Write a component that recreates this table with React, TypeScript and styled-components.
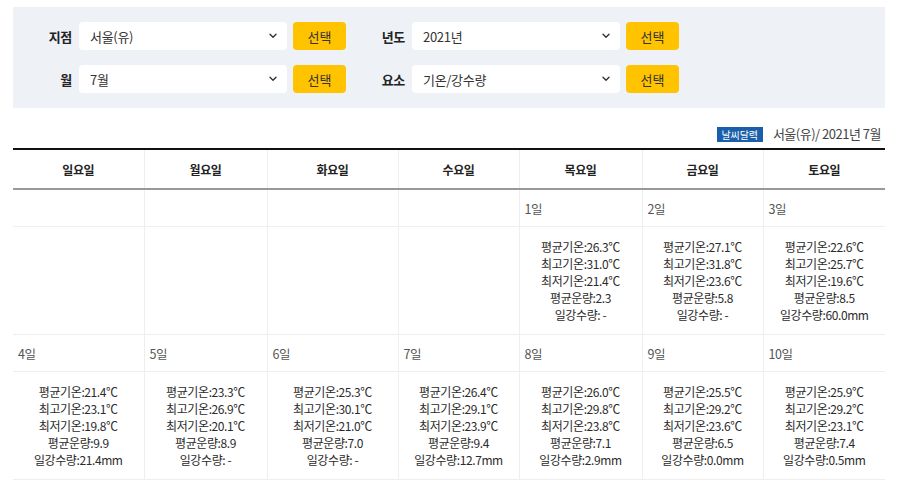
import React from "react";
import styled, { createGlobalStyle } from "styled-components";

const Global = createGlobalStyle`
  html, body { margin: 0; padding: 0; background: #fff; }
  body { font-family: "Noto Sans CJK KR", "Noto Sans", sans-serif; color: #333; }
`;

const Page = styled.div`
  padding: 7px 15px 0 13px;
`;

const SearchPanel = styled.div`
  background: #eef1f6;
  padding: 15px 0 15px;
  display: flex;
  flex-direction: column;
  gap: 15px;
`;

const FormRow = styled.div`
  display: flex;
  align-items: center;
`;

const Field = styled.div`
  display: flex;
  align-items: center;
`;

const Label = styled.span`
  width: 59px;
  margin-right: 7px;
  text-align: right;
  font-size: 13px;
  font-weight: 700;
  color: #222;
  letter-spacing: -0.3px;
`;

const SelectBox = styled.div`
  box-sizing: border-box;
  width: 208px;
  height: 28px;
  background: #fff;
  border-radius: 4px;
  display: flex;
  align-items: center;
  justify-content: space-between;
  padding: 0 10px 0 11px;
  font-size: 13px;
  color: #333;
  letter-spacing: -0.3px;
`;

const Button = styled.button`
  box-sizing: border-box;
  width: 53px;
  height: 28px;
  margin-left: 6px;
  border: none;
  border-radius: 4px;
  background: #ffc300;
  color: #333;
  font-family: inherit;
  font-size: 13px;
  padding: 0;
  cursor: pointer;
`;

const Caption = styled.div`
  height: 40px;
  display: flex;
  align-items: flex-end;
  justify-content: flex-end;
  gap: 10px;
  padding: 0 4px 6px 0;
  box-sizing: border-box;
`;

const Badge = styled.span`
  background: #1b5fab;
  color: #fff;
  font-size: 10px;
  height: 15px;
  line-height: 15px;
  padding: 0 5px;
  letter-spacing: -0.1px;
`;

const CaptionText = styled.span`
  font-size: 13px;
  line-height: 16px;
  color: #444;
  letter-spacing: -0.5px;
`;

const Table = styled.table`
  width: 872px;
  table-layout: fixed;
  border-collapse: collapse;
  border-top: 2px solid #111;
  font-size: 12px;
  letter-spacing: -0.4px;
`;

const HeadCell = styled.th`
  height: 38px;
  padding: 0;
  font-weight: 700;
  color: #222;
  text-align: center;
  border-bottom: 2px solid #999;
  border-right: 1px solid #eee;
  &:last-child { border-right: none; }
`;

const DayCell = styled.td`
  height: 36px;
  padding: 0 0 0 5px;
  color: #555;
  text-align: left;
  font-size: 12.5px;
  border-bottom: 1px solid #eee;
  border-right: 1px solid #eee;
  &:last-child { border-right: none; }
`;

const DataCell = styled.td`
  height: 107px;
  padding: 0;
  text-align: center;
  vertical-align: middle;
  line-height: 17px;
  color: #2b2b2b;
  border-bottom: 1px solid #eee;
  border-right: 1px solid #eee;
  &:last-child { border-right: none; }
`;

const Chevron = () => (
  <svg width="8" height="6" viewBox="0 0 8 6" fill="none">
    <path d="M1 1.2 L4 4.2 L7 1.2" stroke="#333" strokeWidth="1.4" strokeLinecap="round" strokeLinejoin="round" />
  </svg>
);

type Stat = { avg: string; max: string; min: string; cloud: string; rain: string };
type Day = { d: number; s: Stat } | null;

const s = (avg: string, max: string, min: string, cloud: string, rain: string): Stat => ({ avg, max, min, cloud, rain });

const weeks: Day[][] = [
  [null, null, null, null,
    { d: 1, s: s("26.3", "31.0", "21.4", "2.3", " -") },
    { d: 2, s: s("27.1", "31.8", "23.6", "5.8", " -") },
    { d: 3, s: s("22.6", "25.7", "19.6", "8.5", "60.0mm") }],
  [{ d: 4, s: s("21.4", "23.1", "19.8", "9.9", "21.4mm") },
    { d: 5, s: s("23.3", "26.9", "20.1", "8.9", " -") },
    { d: 6, s: s("25.3", "30.1", "21.0", "7.0", " -") },
    { d: 7, s: s("26.4", "29.1", "23.9", "9.4", "12.7mm") },
    { d: 8, s: s("26.0", "29.8", "23.8", "7.1", "2.9mm") },
    { d: 9, s: s("25.5", "29.2", "23.6", "6.5", "0.0mm") },
    { d: 10, s: s("25.9", "29.2", "23.1", "7.4", "0.5mm") }],
];

const colWidths = [131, 123, 131, 121, 123, 121, 122];
const dayNames = ["일요일", "월요일", "화요일", "수요일", "목요일", "금요일", "토요일"];

const FieldGroup = ({ label, value }: { label: string; value: string }) => (
  <Field>
    <Label>{label}</Label>
    <SelectBox>
      <span>{value}</span>
      <Chevron />
    </SelectBox>
    <Button>선택</Button>
  </Field>
);

export default function App() {
  return (
    <Page>
      <Global />
      <SearchPanel>
        <FormRow>
          <FieldGroup label="지점" value="서울(유)" />
          <FieldGroup label="년도" value="2021년" />
        </FormRow>
        <FormRow>
          <FieldGroup label="월" value="7월" />
          <FieldGroup label="요소" value="기온/강수량" />
        </FormRow>
      </SearchPanel>
      <Caption>
        <Badge>날씨달력</Badge>
        <CaptionText>서울(유)/ 2021년 7월</CaptionText>
      </Caption>
      <Table>
        <colgroup>
          {colWidths.map((w, i) => (
            <col key={i} style={{ width: w }} />
          ))}
        </colgroup>
        <thead>
          <tr>
            {dayNames.map((n) => (
              <HeadCell key={n}>{n}</HeadCell>
            ))}
          </tr>
        </thead>
        <tbody>
          {weeks.map((week, wi) => (
            <React.Fragment key={wi}>
              <tr>
                {week.map((day, i) => (
                  <DayCell key={i}>{day ? `${day.d}일` : ""}</DayCell>
                ))}
              </tr>
              <tr>
                {week.map((day, i) => (
                  <DataCell key={i}>
                    {day && (
                      <>
                        평균기온:{day.s.avg}℃<br />
                        최고기온:{day.s.max}℃<br />
                        최저기온:{day.s.min}℃<br />
                        평균운량:{day.s.cloud}<br />
                        일강수량:{day.s.rain}
                      </>
                    )}
                  </DataCell>
                ))}
              </tr>
            </React.Fragment>
          ))}
        </tbody>
      </Table>
    </Page>
  );
}
